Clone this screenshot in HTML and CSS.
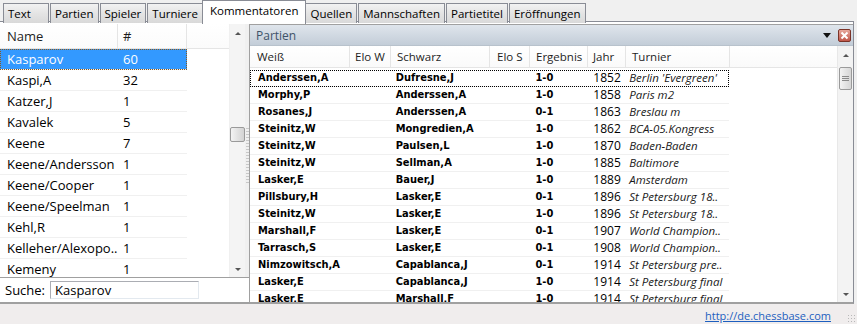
FILE: index.html
```html
<!DOCTYPE html>
<html lang="de">
<head>
    <meta charset="UTF-8">
    <title>Kommentatoren</title>
    <link rel="stylesheet" href="styles.css">
</head>
<body>
    <div class="tabs">
        <div class="tab">Text</div>
        <div class="tab">Partien</div>
        <div class="tab">Spieler</div>
        <div class="tab">Turniere</div>
        <div class="tab active">Kommentatoren</div>
        <div class="tab">Quellen</div>
        <div class="tab">Mannschaften</div>
        <div class="tab">Partietitel</div>
        <div class="tab">Eröffnungen</div>
    </div>

    <div class="main">
        <div class="left">
            <div class="list-wrap">
                <div class="list">
                    <div class="lhead">
                        <div class="lc name">Name</div>
                        <div class="lc num">#</div>
                    </div>
                    <div class="lrow sel"><div class="lc name">Kasparov</div><div class="lc num">60</div></div>
                    <div class="lrow"><div class="lc name">Kaspi,A</div><div class="lc num">32</div></div>
                    <div class="lrow"><div class="lc name">Katzer,J</div><div class="lc num">1</div></div>
                    <div class="lrow"><div class="lc name">Kavalek</div><div class="lc num">5</div></div>
                    <div class="lrow"><div class="lc name">Keene</div><div class="lc num">7</div></div>
                    <div class="lrow"><div class="lc name">Keene/Andersson</div><div class="lc num">1</div></div>
                    <div class="lrow"><div class="lc name">Keene/Cooper</div><div class="lc num">1</div></div>
                    <div class="lrow"><div class="lc name">Keene/Speelman</div><div class="lc num">1</div></div>
                    <div class="lrow"><div class="lc name">Kehl,R</div><div class="lc num">1</div></div>
                    <div class="lrow"><div class="lc name">Kelleher/Alexopo..</div><div class="lc num">1</div></div>
                    <div class="lrow"><div class="lc name">Kemeny</div><div class="lc num">1</div></div>
                </div>
                <div class="vscroll small">
                    <div class="arrow up"></div>
                    <div class="track"><div class="thumb"></div></div>
                    <div class="arrow down"></div>
                </div>
                <div class="splitter"><div class="grip"></div></div>
            </div>
            <div class="search">
                <span>Suche:</span>
                <div class="field">Kasparov</div>
            </div>
        </div>

        <div class="right">
            <div class="titlebar">
                <span>Partien</span>
                <div class="tools">
                    <div class="drop"></div>
                    <div class="close">
                        <svg width="9" height="9" viewBox="0 0 9 9"><path d="M1.5 1.5 L7.5 7.5 M7.5 1.5 L1.5 7.5" stroke="#fff" stroke-width="2"/></svg>
                    </div>
                </div>
            </div>
            <div class="grid-wrap">
                <div class="games">
                    <div class="ghead">
                        <div class="c w">Weiß</div>
                        <div class="c ew">Elo W</div>
                        <div class="c s">Schwarz</div>
                        <div class="c es">Elo S</div>
                        <div class="c r">Ergebnis</div>
                        <div class="c y">Jahr</div>
                        <div class="c t">Turnier</div>
                        <div class="c fill"></div>
                    </div>
                    <div id="rows"></div>
                </div>
                <div class="vscroll big">
                    <div class="arrow up"></div>
                    <div class="track"><div class="thumb"><i></i><i></i><i></i></div></div>
                    <div class="arrow down"></div>
                </div>
            </div>
        </div>
    </div>

    <div class="status">
        <a href="#">http://de.chessbase.com</a>
        <div class="sizegrip"></div>
    </div>

    <script>
        const games = [
            ['Anderssen,A', 'Dufresne,J', '1-0', 1852, "Berlin 'Evergreen'"],
            ['Morphy,P', 'Anderssen,A', '1-0', 1858, 'Paris m2'],
            ['Rosanes,J', 'Anderssen,A', '0-1', 1863, 'Breslau m'],
            ['Steinitz,W', 'Mongredien,A', '1-0', 1862, 'BCA-05.Kongress'],
            ['Steinitz,W', 'Paulsen,L', '1-0', 1870, 'Baden-Baden'],
            ['Steinitz,W', 'Sellman,A', '1-0', 1885, 'Baltimore'],
            ['Lasker,E', 'Bauer,J', '1-0', 1889, 'Amsterdam'],
            ['Pillsbury,H', 'Lasker,E', '0-1', 1896, 'St Petersburg 18..'],
            ['Steinitz,W', 'Lasker,E', '1-0', 1896, 'St Petersburg 18..'],
            ['Marshall,F', 'Lasker,E', '0-1', 1907, 'World Champion..'],
            ['Tarrasch,S', 'Lasker,E', '0-1', 1908, 'World Champion..'],
            ['Nimzowitsch,A', 'Capablanca,J', '0-1', 1914, 'St Petersburg pre..'],
            ['Lasker,E', 'Capablanca,J', '1-0', 1914, 'St Petersburg final'],
            ['Lasker,E', 'Marshall,F', '1-0', 1914, 'St Petersburg final']
        ];

        document.getElementById('rows').innerHTML = games.map((g, i) => `
            <div class="grow${i === 0 ? ' focus' : ''}">
                <div class="c w b">${g[0]}</div>
                <div class="c ew"></div>
                <div class="c s b">${g[1]}</div>
                <div class="c es"></div>
                <div class="c r b">${g[2]}</div>
                <div class="c y">${g[3]}</div>
                <div class="c t">${g[4]}</div>
            </div>
        `).join('');
    </script>
</body>
</html>
```

FILE: styles.css
```css
* {
    margin: 0;
    padding: 0;
    box-sizing: border-box;
}

body {
    width: 857px;
    height: 324px;
    overflow: hidden;
    background: #f0f0f0;
    font-family: "Open Sans", "Noto Sans", sans-serif;
    font-size: 12px;
    color: #000;
}

/* tab strip */
.tabs {
    display: flex;
    height: 24px;
    padding-left: 3px;
    padding-right: 3px;
    position: relative;
}

.tabs::after {
    content: "";
    position: absolute;
    left: 0;
    right: 3px;
    bottom: 0;
    height: 2px;
    border-top: 1px solid #898c95;
    border-right: 1px solid #898c95;
    background: #fff;
    z-index: 0;
}

.tab {
    margin-top: 3px;
    height: 20px;
    min-width: 46px;
    padding: 0 4px;
    margin-right: 1px;
    border: 1px solid #898c95;
    border-bottom: none;
    background: linear-gradient(#f2f2f2, #e4e4e4 50%, #d9d9d9);
    font-size: 11.5px;
    line-height: 19px;
    position: relative;
    z-index: 1;
    white-space: nowrap;
}

.tab.active {
    margin-top: 0;
    height: 24px;
    margin-left: -2px;
    margin-right: -1px;
    padding: 0 7px;
    background: #fff;
    line-height: 20px;
    z-index: 2;
}

/* main split */
.main {
    display: flex;
    height: 280px;
    border-right: 1px solid #898c95;
    margin-right: 3px;
    border-bottom: 2px solid #a0a0a0;
    background: #fff;
}

.left {
    width: 250px;
    display: flex;
    flex-direction: column;
}

.list-wrap {
    flex: 1;
    display: flex;
    border-bottom: 1px solid #a0a0a0;
    overflow: hidden;
}

.list {
    width: 229px;
    font-size: 13px;
}

.lhead {
    display: flex;
    height: 25px;
    border-bottom: 1px solid #e5e5e5;
    background: linear-gradient(#fff, #fbfbfb);
}

.lhead .lc {
    line-height: 24px;
    border-right: 1px solid #e5e5e5;
    color: #1e1e1e;
}

.lhead .name {
    padding-left: 5px;
}

.lhead .num {
    padding-left: 7px;
}

.lc.name {
    width: 118px;
    padding-left: 7px;
    white-space: nowrap;
    overflow: hidden;
}

.lc.num {
    width: 69px;
    padding-left: 5px;
}

.lrow {
    display: flex;
    width: 187px;
    height: 21px;
    line-height: 20px;
    border-bottom: 1px solid #f0f0f0;
}

.lrow.sel {
    background: #3399ff;
    color: #fff;
    outline: 1px dotted #8a5a20;
    outline-offset: -1px;
}

/* scrollbars */
.vscroll {
    width: 16px;
    display: flex;
    flex-direction: column;
    background: #f4f4f4;
    border-left: 1px solid #f0f0f0;
}

.arrow {
    height: 17px;
    position: relative;
}

.arrow::after {
    content: "";
    position: absolute;
    left: 5px;
    border-left: 3px solid transparent;
    border-right: 3px solid transparent;
}

.arrow.up::after {
    top: 8px;
    border-bottom: 3px solid #555;
}

.arrow.down::after {
    top: 8px;
    border-top: 3px solid #555;
}

.track {
    flex: 1;
    position: relative;
}

.small .thumb {
    position: absolute;
    left: 0;
    top: 86px;
    width: 15px;
    height: 15px;
    border: 1px solid #9a9a9a;
    border-radius: 2px;
    background: linear-gradient(90deg, #f3f3f3, #e2e2e2 50%, #d3d3d3);
}

.splitter {
    width: 5px;
    background: #f0f0f0;
    border-right: 1px solid #a0a0a0;
    display: flex;
    align-items: center;
}

.grip {
    width: 3px;
    height: 56px;
    margin-left: 1px;
    margin-top: 10px;
    background: repeating-linear-gradient(#c8c8c8 0 1px, transparent 1px 3px);
}

.search {
    height: 24px;
    display: flex;
    align-items: center;
    padding-left: 5px;
    font-size: 13px;
    border-right: 1px solid #a0a0a0;
}

.search span {
    width: 45px;
}

.field {
    width: 149px;
    height: 18px;
    line-height: 16px;
    padding-left: 4px;
    border-top: 1px solid #abadb3;
    border-left: 1px solid #abadb3;
    border-right: 1px solid #e3e9ef;
    border-bottom: 1px solid #e3e9ef;
}

/* games panel */
.right {
    flex: 1;
    display: flex;
    flex-direction: column;
    border-top: 1px solid #a0a0a0;
}

.titlebar {
    height: 21px;
    display: flex;
    align-items: center;
    justify-content: space-between;
    padding-left: 6px;
    background: linear-gradient(#dfe5ec, #c3cdd8);
    color: #3e5268;
    border-bottom: 1px solid #b8c2cc;
}

.tools {
    display: flex;
    align-items: center;
}

.drop {
    width: 0;
    height: 0;
    border-left: 4px solid transparent;
    border-right: 4px solid transparent;
    border-top: 5px solid #111;
    margin-right: 7px;
}

.close {
    width: 13px;
    height: 13px;
    margin-right: 2px;
    border: 1px solid #7a3328;
    border-radius: 2px;
    background: linear-gradient(#e7a89c, #c1574a);
    display: flex;
    align-items: center;
    justify-content: center;
}

.grid-wrap {
    flex: 1;
    display: flex;
    overflow: hidden;
}

.games {
    flex: 1;
}

.ghead,
.grow {
    display: flex;
}

.ghead {
    height: 22px;
    line-height: 21px;
    font-size: 11.5px;
    background: linear-gradient(#fff, #fafafa);
    border-bottom: 1px solid #e5e5e5;
    color: #1e1e1e;
}

.ghead .c {
    border-right: 1px solid #e5e5e5;
}

.c {
    white-space: nowrap;
    overflow: hidden;
}

.c.w { width: 100px; padding-left: 7px; }
.c.ew { width: 41px; padding-left: 5px; }
.c.s { width: 99px; padding-left: 6px; }
.c.es { width: 40px; padding-left: 7px; }
.c.r { width: 58px; padding-left: 6px; }
.c.y { width: 38px; padding-left: 5px; }
.c.t { width: 104px; padding-left: 6px; }
.c.fill { flex: 1; border-right: none; }

.grow {
    width: 479px;
    height: 17px;
    line-height: 16px;
    border-bottom: 1px solid #f0f0f0;
}

.grow .c.w { padding-left: 8px; }
.grow .c.s { padding-left: 5px; }
.grow .c.r { padding-left: 6px; }
.grow .c.y { padding-left: 6px; }
.grow .c.t { padding-left: 4px; }

.grow.focus {
    margin-top: 2px;
    outline: 1px dotted #000;
    outline-offset: -1px;
}

.b {
    font-family: "DejaVu Sans Condensed", "DejaVu Sans", sans-serif;
    font-weight: bold;
    font-size: 11px;
}

.grow .c.y {
    font-size: 12px;
}

.grow .c.t {
    font-style: italic;
    font-size: 11.5px;
    color: #1a1a1a;
}

.big {
    width: 16px;
    background: #f3f3f3;
    border-left: 1px solid #e8e8e8;
}

.big .thumb {
    position: absolute;
    left: 1px;
    top: 4px;
    width: 13px;
    height: 23px;
    border: 1px solid #9a9a9a;
    border-radius: 2px;
    background: linear-gradient(90deg, #f3f3f3, #e4e4e4 50%, #d6d6d6);
    display: flex;
    flex-direction: column;
    justify-content: center;
    align-items: center;
    gap: 1px;
}

.big .thumb i {
    width: 7px;
    height: 1px;
    background: #8a8a8a;
}

/* status bar */
.status {
    height: 20px;
    display: flex;
    justify-content: flex-end;
    align-items: flex-end;
    padding-right: 26px;
    padding-bottom: 1px;
    background: #f0eded;
    position: relative;
}

.status a {
    color: #1d5fbf;
    font-size: 11px;
}

.sizegrip {
    position: absolute;
    right: 2px;
    bottom: 2px;
    width: 8px;
    height: 8px;
    background: radial-gradient(circle, #b8b8b8 0 0.8px, transparent 1px) 0 0 / 3px 3px;
}
```
